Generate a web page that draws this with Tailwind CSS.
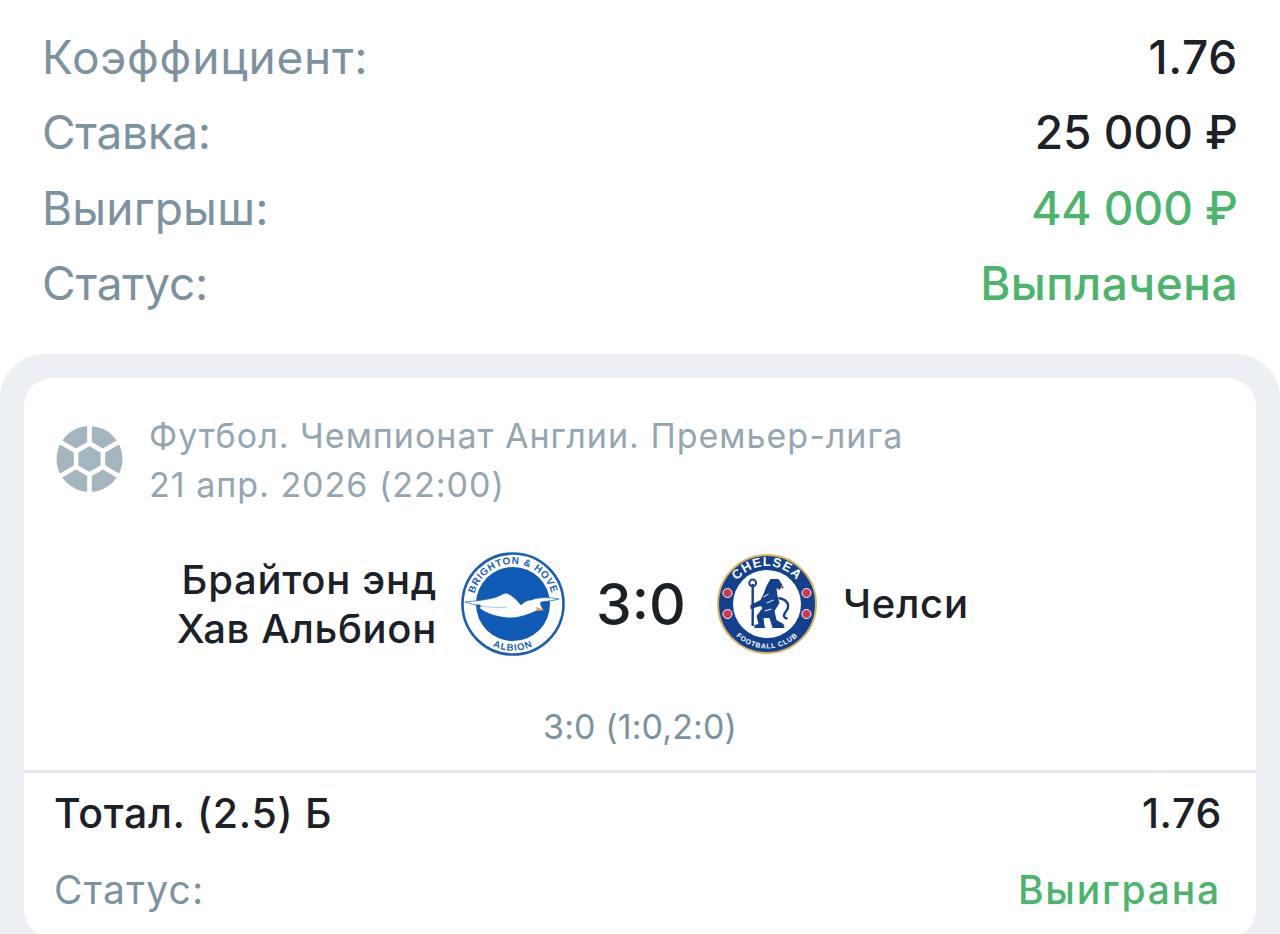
<!DOCTYPE html>
<html lang="ru">

<head>
    <meta charset="UTF-8">
    <meta name="viewport" content="width=device-width, initial-scale=1.0">
    <title>Ставка</title>
    <script src="https://cdn.jsdelivr.net/npm/@tailwindcss/browser@4"></script>
</head>

<body class="bg-white font-['Inter',sans-serif] h-[934px] overflow-hidden">
    <!-- Итоги ставки -->
    <div class="pl-[42px] pr-[42px] pt-[20px] h-[354px] text-[46px] leading-[75.3px] text-[#7c939f]">
        <div class="flex justify-between"><span class="tracking-[0.8px]">Коэффициент:</span><span class="text-[#1c2127] font-medium tracking-[0.7px]">1.76</span></div>
        <div class="flex justify-between"><span class="-tracking-[0.3px]">Ставка:</span><span class="text-[#1c2127] font-medium">25 000 ₽</span></div>
        <div class="flex justify-between"><span class="tracking-[0.2px]">Выигрыш:</span><span class="text-[#4bb56c] font-medium">44 000 ₽</span></div>
        <div class="flex justify-between"><span class="-tracking-[0.2px]">Статус:</span><span class="text-[#4bb56c] font-medium tracking-[0.5px]">Выплачена</span></div>
    </div>

    <!-- Карточка события -->
    <div class="bg-[#eceff3] rounded-t-[44px] px-[24px] pt-[24px] h-[580px]">
        <div class="bg-white rounded-[28px] h-[560px]">
            <div class="flex items-center pl-[32px] pt-[33px]">
                <svg width="68" height="68" viewBox="0 0 68 68" class="shrink-0 -mt-[2px]">
                    <circle cx="33.5" cy="34" r="33" fill="#a3b6c0" />
                    <g stroke="#fff" stroke-width="4.6" fill="none" transform="translate(-.5 0)">
                        <path d="M34 18.5 47.4 26.2V41.8L34 49.5 20.6 41.8V26.2Z" />
                        <path d="M34 18.5V0M47.4 26.2 64 16.5M47.4 41.8 64 51.5M34 49.5V68M20.6 41.8 4 51.5M20.6 26.2 4 16.5" />
                    </g>
                </svg>
                <div class="ml-[25px] text-[34px] leading-[49px] tracking-[1px] text-[#93a6b1]">
                    <div>Футбол. Чемпионат Англии. Премьер-лига</div>
                    <div>21 апр. 2026 (22:00)</div>
                </div>
            </div>

            <!-- Команды -->
            <div class="flex items-center mt-[41px] h-[108px]">
                <div class="w-[413px] text-right text-[40px] leading-[49px] tracking-[0.7px] font-medium text-[#1c2127]">Брайтон энд<br>Хав Альбион</div>
                <svg width="104" height="104" viewBox="12 12 104 104" class="ml-[24px] shrink-0">
                    <circle cx="64" cy="64" r="50.5" fill="#fff" stroke="#1a5fb4" stroke-width="2.6" />
                    <circle cx="64" cy="64" r="37" fill="#0f5bb5" />
                    <path id="br-top" d="M24 64A40 40 0 0 1 104 64" fill="none" />
                    <path id="br-bottom" d="M24 88A46.6 46.6 0 0 0 104 88" fill="none" />
                    <text font-family="'Liberation Sans',sans-serif" font-size="10" font-weight="700" fill="#1a5fb4" letter-spacing=".7">
                        <textPath href="#br-top" startOffset="50%" text-anchor="middle">BRIGHTON &amp; HOVE</textPath>
                    </text>
                    <text font-family="'Liberation Sans',sans-serif" font-size="9.5" font-weight="700" fill="#1a5fb4" letter-spacing=".8">
                        <textPath href="#br-bottom" startOffset="50%" text-anchor="middle">ALBION</textPath>
                    </text>
                    <path d="M16 62C26 61 36 60 44 58 49 57 53 54 57 53 63 55 68 60 72 65 75 62 78 60 82 60 90 57 100 57 110 59 103 61 97 61 92 62 91 64 92 66 94 69L87 71C78 75 70 78 60 78 48 77 38 74 30 68 32 67 32 66 31 65 26 65 21 64 16 62Z" fill="#fff" stroke="#1a5fb4" stroke-width=".7" />
                    <path d="M31 66C40 67 49 68 58 67" fill="none" stroke="#7fa6d6" stroke-width=".7" />
                    <path d="M87 67 96 70 88 71Z" fill="#e8a33c" />
                </svg>
                <div class="w-[152px] text-center text-[57px] leading-none font-medium text-[#1c2127]">3:0</div>
                <svg width="100" height="100" viewBox="12.5 14 100 100" class="shrink-0">
                    <circle cx="62.5" cy="64" r="49" fill="#13418f" stroke="#d9b45b" stroke-width="2" />
                    <circle cx="62.5" cy="64" r="34" fill="#fff" />
                    <path id="ch-top" d="M24.5 64A38 38 0 0 1 100.5 64" fill="none" />
                    <path id="ch-bottom" d="M18 64A44.5 44.5 0 0 0 107 64" fill="none" />
                    <text font-family="'Liberation Sans',sans-serif" font-size="13" font-weight="700" fill="#fff" letter-spacing="1">
                        <textPath href="#ch-top" startOffset="50%" text-anchor="middle">CHELSEA</textPath>
                    </text>
                    <text font-family="'Liberation Sans',sans-serif" font-size="7" font-weight="700" fill="#fff" letter-spacing=".7">
                        <textPath href="#ch-bottom" startOffset="50%" text-anchor="middle">FOOTBALL CLUB</textPath>
                    </text>
                    <g fill="#d0384b" stroke="#fff" stroke-width="1">
                        <circle cx="23" cy="53" r="4.5" />
                        <circle cx="23" cy="74" r="4.5" />
                        <circle cx="102" cy="53" r="4.5" />
                        <circle cx="102" cy="74" r="4.5" />
                    </g>
                    <g fill="#13418f">
                        <rect x="47" y="44" width="2.4" height="42" />
                        <circle cx="48.2" cy="43" r="3.4" fill="none" stroke="#13418f" stroke-width="2" />
                        <path d="M62 46 66 39 74 39 78 45 75 50 72 48 73 56 75 63 70 71 72 80 79 84 80 88 68 88 65 78 59 78 60 86 61 88 50 88 50 85 54 84 52 76 58 68 56 66 46 69 46 65 56 60 59 54Z" />
                    </g>
                    <path d="M62 63 69 60M60 71 67 69M59 57 64 54" fill="none" stroke="#fff" stroke-width="1" />
                    <path d="M74 58C84 60 86 66 81 72 78 76 80 79 83 78" fill="none" stroke="#13418f" stroke-width="2.4" />
                    <path d="M76 47 80 46 78 49Z" fill="#d0384b" />
                </svg>
                <div class="ml-[26px] text-[40px] tracking-[0.7px] font-medium text-[#1c2127]">Челси</div>
            </div>

            <div class="mt-[45px] text-center text-[34px] leading-[48px] tracking-[0.1px] text-[#7c939f]">3:0 (1:0,2:0)</div>
            <div class="mt-[19px] border-t-[3px] border-[#e6e9f1]"></div>

            <!-- Исход -->
            <div class="px-[30px] pt-[15px]">
                <div class="flex justify-between text-[41px] leading-[50px] tracking-[0.7px] font-medium text-[#1c2127]"><span>Тотал. (2.5) Б</span><span class="mr-[4px]">1.76</span></div>
                <div class="flex justify-between mt-[27px] text-[39px] leading-[50px] text-[#7c939f]"><span class="tracking-[1.2px]">Статус:</span><span class="text-[#4bb56c] font-medium tracking-[1.8px] mr-[5px]">Выиграна</span></div>
            </div>
        </div>
    </div>
</body>

</html>
